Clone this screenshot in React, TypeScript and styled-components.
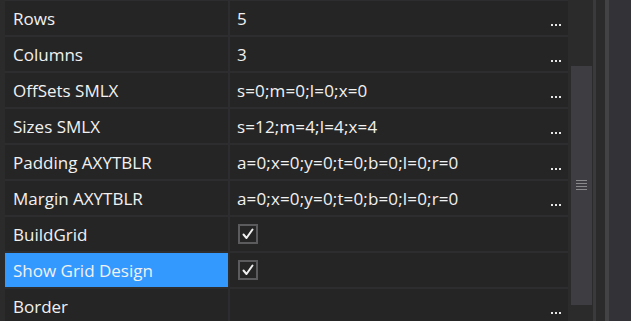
import styled, { createGlobalStyle } from 'styled-components'

type Prop = {
  name: string
  value?: string
  checked?: boolean
  ellipsis?: boolean
  selected?: boolean
}

const props: Prop[] = [
  { name: 'Rows', value: '5', ellipsis: true },
  { name: 'Columns', value: '3', ellipsis: true },
  { name: 'OffSets SMLX', value: 's=0;m=0;l=0;x=0', ellipsis: true },
  { name: 'Sizes SMLX', value: 's=12;m=4;l=4;x=4', ellipsis: true },
  { name: 'Padding AXYTBLR', value: 'a=0;x=0;y=0;t=0;b=0;l=0;r=0', ellipsis: true },
  { name: 'Margin AXYTBLR', value: 'a=0;x=0;y=0;t=0;b=0;l=0;r=0', ellipsis: true },
  { name: 'BuildGrid', checked: true },
  { name: 'Show Grid Design', checked: true, selected: true },
  { name: 'Border', value: '', ellipsis: true },
]

const GlobalStyle = createGlobalStyle`
  html, body {
    margin: 0;
    padding: 0;
    background: #333337;
    overflow: hidden;
  }
`

const App = () => {
  return (
    <>
      <GlobalStyle />
      <Window>
        <LeftStrip />
        <Grid>
          {props.map((p) => (
            <Row key={p.name}>
              <NameCell $selected={p.selected}>{p.name}</NameCell>
              <ValueCell>
                {p.checked !== undefined ? (
                  <CheckBox>
                    <svg width="14" height="14" viewBox="0 0 14 14">
                      <polyline
                        points="2.5,7.5 5.5,11 11.5,2.5"
                        fill="none"
                        stroke="#f0f0f0"
                        strokeWidth="2"
                        strokeLinecap="round"
                        strokeLinejoin="round"
                      />
                    </svg>
                  </CheckBox>
                ) : (
                  <Value>{p.value}</Value>
                )}
                {p.ellipsis && (
                  <Ellipsis>
                    <Dot />
                    <Dot />
                    <Dot />
                  </Ellipsis>
                )}
              </ValueCell>
            </Row>
          ))}
        </Grid>
        <ScrollTrack>
          <Thumb>
            <Grip>
              <GripLine />
              <GripLine />
              <GripLine />
              <GripLine />
            </Grip>
          </Thumb>
        </ScrollTrack>
        <Divider />
        <Gutter />
        <Divider $wide />
        <Rest />
      </Window>
    </>
  )
}

const Window = styled.div`
  display: flex;
  width: 631px;
  height: 321px;
  overflow: hidden;
  font-family: 'Open Sans', 'Noto Sans', sans-serif;
`

const LeftStrip = styled.div`
  width: 5px;
  flex-shrink: 0;
  background: #2b2b2c;
`

const Grid = styled.div`
  width: 563px;
  flex-shrink: 0;
  display: flex;
  flex-direction: column;
  gap: 2px;
  padding-top: 1px;
  background: #2d2d30;
`

const Row = styled.div`
  display: grid;
  grid-template-columns: 223px 338px;
  column-gap: 2px;
  height: 34px;
  flex-shrink: 0;
`

const NameCell = styled.div<{ $selected?: boolean }>`
  display: flex;
  align-items: center;
  padding-left: 8px;
  background: ${(p) => (p.$selected ? '#3399ff' : '#252526')};
  color: #f1f1f1;
  font-size: 17px;
  white-space: nowrap;
`

const ValueCell = styled.div`
  position: relative;
  display: flex;
  align-items: center;
  padding-left: 7px;
  background: #252526;
`

const Value = styled.span`
  color: #f1f1f1;
  font-size: 17px;
  letter-spacing: 0.15px;
  white-space: nowrap;
`

const CheckBox = styled.div`
  display: flex;
  align-items: center;
  justify-content: center;
  width: 16px;
  height: 16px;
  margin-left: 1px;
  border: 2px solid #5b5b5e;
  background: #252526;
`

const Ellipsis = styled.div`
  position: absolute;
  right: 7px;
  bottom: 9px;
  display: flex;
  gap: 2px;
`

const Dot = styled.span`
  width: 2px;
  height: 2px;
  background: #e6e6e6;
`

const ScrollTrack = styled.div`
  width: 25px;
  flex-shrink: 0;
  background: #2b2b2c;
  padding: 66px 1px 0 3px;
  box-sizing: border-box;
`

const Thumb = styled.div`
  width: 21px;
  height: 239px;
  background: #3e3e42;
  display: flex;
  align-items: center;
  justify-content: center;
`

const Grip = styled.div`
  display: flex;
  flex-direction: column;
  gap: 2px;
  margin-top: -1px;
`

const GripLine = styled.div`
  width: 11px;
  height: 1px;
  background: #8a8a8c;
`

const Divider = styled.div<{ $wide?: boolean }>`
  width: ${(p) => (p.$wide ? '4px' : '3px')};
  flex-shrink: 0;
  background: ${(p) => (p.$wide ? '#434346' : '#3a3a3d')};
`

const Gutter = styled.div`
  width: 9px;
  flex-shrink: 0;
  background: #2b2b2c;
`

const Rest = styled.div`
  flex: 1;
  background: #333337;
`

export default App
